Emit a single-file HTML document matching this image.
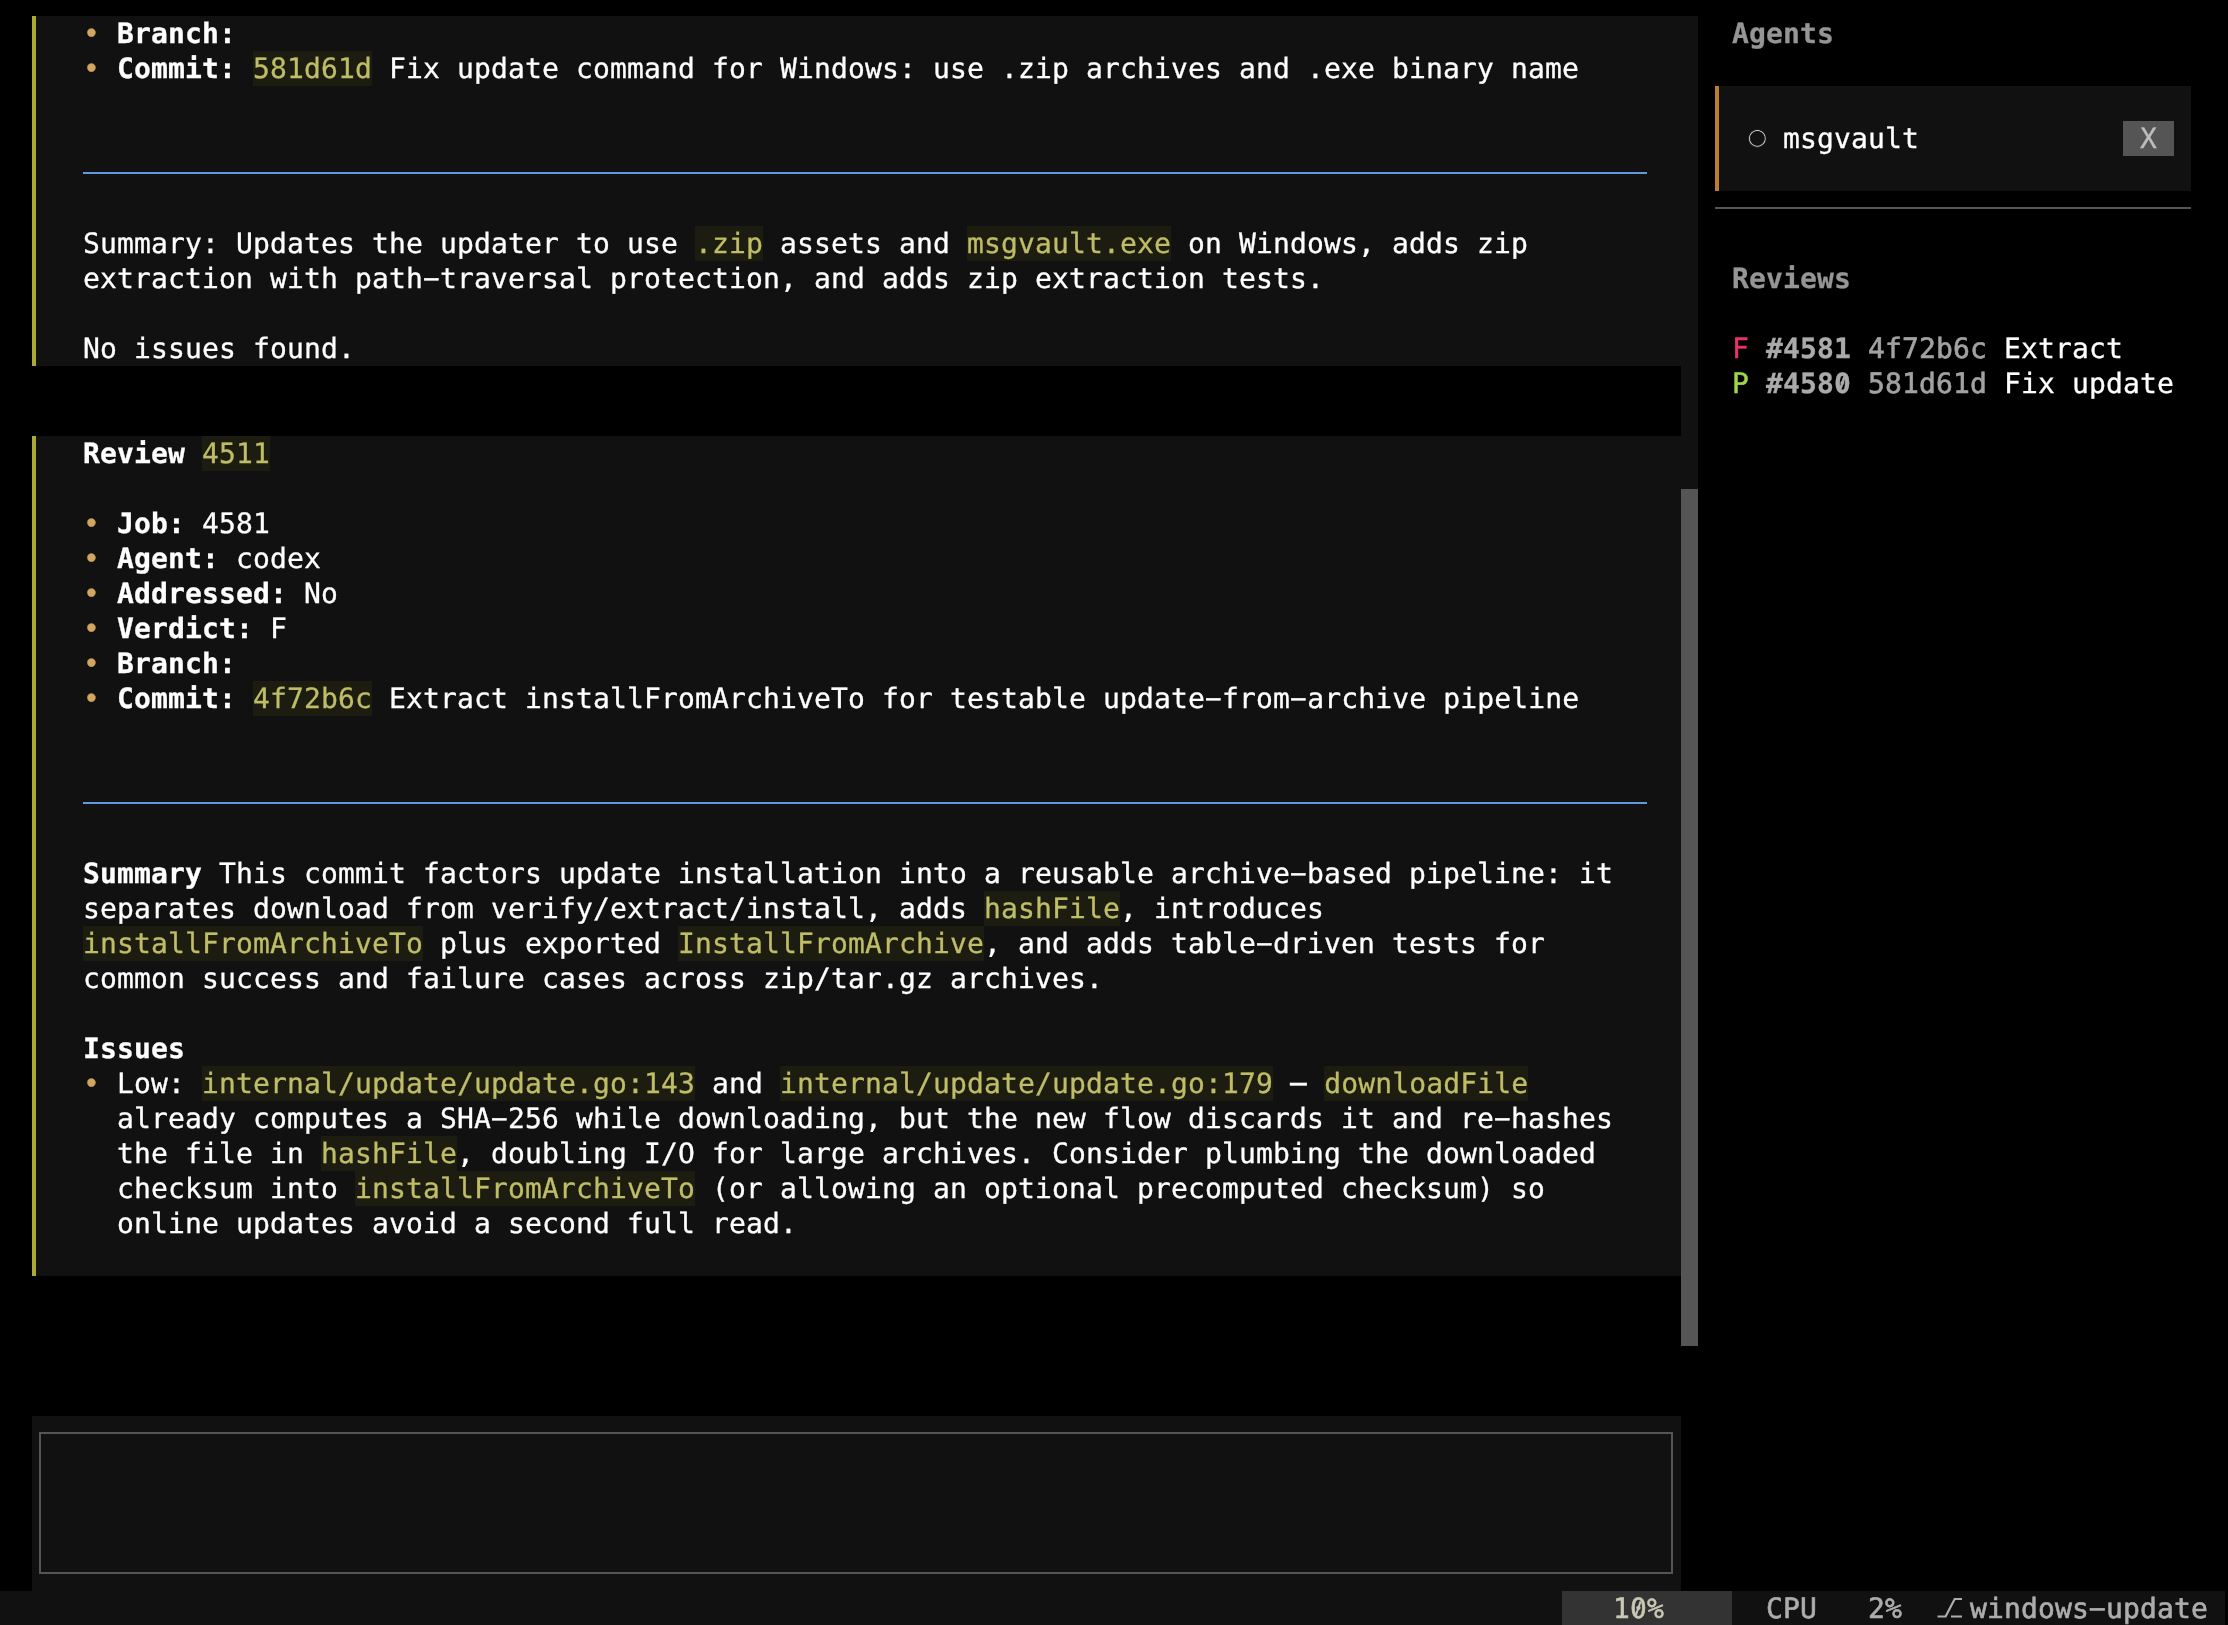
<!DOCTYPE html>
<html lang="en"><head><meta charset="utf-8"><title>reviews</title>
<style>
html,body{margin:0;padding:0;background:#000;}
body{width:2228px;height:1625px;overflow:hidden;position:relative;}
#s{position:absolute;left:0;top:0;width:2228px;height:1625px;background:#000;overflow:hidden;
 font-family:"DejaVu Sans Mono","Liberation Mono",monospace;font-size:28px;color:#ffffff;}
.b{position:absolute;}
#t{position:absolute;left:0;top:0;width:2228px;height:1625px;will-change:transform;}
.r{position:absolute;height:35px;line-height:35px;white-space:pre;letter-spacing:0.1426px;text-rendering:geometricPrecision;font-kerning:none;-webkit-text-stroke:0.3px;font-variant-ligatures:none;}
.r span{display:inline-block;height:35px;vertical-align:top;}
.r span.hy{transform:translateY(-1px) scaleX(1.96);}
.r span.em{transform:translateY(-1px) scaleY(1.15);}
.bd{font-weight:bold;}
.bu{color:#d2a560;}
.cd{color:#bfbd66;}
.hd{font-weight:bold;color:#959595;}
.r span.ci{color:#d0d0d0;-webkit-text-stroke:0.8px #111111;transform:translateY(-2.4px) scale(1.05);}
.xb{color:#bdbdbd;}
.vf{color:#e63468;-webkit-text-stroke:0.45px;}
.vp{color:#a2d848;-webkit-text-stroke:0.45px;}
.jn{font-weight:bold;color:#aaaaaa;}
.sh{color:#a2a2a2;-webkit-text-stroke:0.6px;}
.st1{color:#c9c9b4;-webkit-text-stroke:0.5px;}
.st2{color:#adadad;-webkit-text-stroke:0.6px;}
</style></head>
<body><div id="s">
<div class="b" style="left:32px;top:16px;width:1649px;height:350px;background:#111111;"></div>
<div class="b" style="left:32px;top:436px;width:1649px;height:840px;background:#111111;"></div>
<div class="b" style="left:1681px;top:16px;width:17px;height:1330px;background:#111111;"></div>
<div class="b" style="left:1681px;top:489px;width:17px;height:857px;background:#555555;"></div>
<div class="b" style="left:32px;top:16px;width:4px;height:350px;background:#acaa36;"></div>
<div class="b" style="left:32px;top:436px;width:4px;height:840px;background:#acaa36;"></div>
<div class="b" style="left:32px;top:1416px;width:1649px;height:175px;background:#111111;"></div>
<div class="b" style="left:39px;top:1432px;width:1634px;height:142px;border:2px solid #555555;box-sizing:border-box"></div>
<div class="b" style="left:0px;top:1591px;width:2225px;height:35px;background:#111111;"></div>
<div class="b" style="left:1562px;top:1591px;width:170px;height:35px;background:#333333;"></div>
<div class="b" style="left:83px;top:172px;width:1564px;height:2px;background:#6399e3;"></div>
<div class="b" style="left:83px;top:802px;width:1564px;height:2px;background:#6399e3;"></div>
<div class="b" style="left:1715px;top:86px;width:476px;height:105px;background:#111111;"></div>
<div class="b" style="left:1715px;top:86px;width:4px;height:105px;background:#be7d2c;"></div>
<div class="b" style="left:1715px;top:207px;width:476px;height:2px;background:#555555;"></div>
<div class="b" style="left:253px;top:51px;width:119px;height:35px;background:#1c1c11"></div>
<div class="b" style="left:695px;top:226px;width:68px;height:35px;background:#1c1c11"></div>
<div class="b" style="left:967px;top:226px;width:204px;height:35px;background:#1c1c11"></div>
<div class="b" style="left:202px;top:436px;width:68px;height:35px;background:#1c1c11"></div>
<div class="b" style="left:253px;top:681px;width:119px;height:35px;background:#1c1c11"></div>
<div class="b" style="left:984px;top:891px;width:136px;height:35px;background:#1c1c11"></div>
<div class="b" style="left:83px;top:926px;width:340px;height:35px;background:#1c1c11"></div>
<div class="b" style="left:678px;top:926px;width:306px;height:35px;background:#1c1c11"></div>
<div class="b" style="left:202px;top:1066px;width:493px;height:35px;background:#1c1c11"></div>
<div class="b" style="left:780px;top:1066px;width:493px;height:35px;background:#1c1c11"></div>
<div class="b" style="left:1324px;top:1066px;width:204px;height:35px;background:#1c1c11"></div>
<div class="b" style="left:321px;top:1136px;width:136px;height:35px;background:#1c1c11"></div>
<div class="b" style="left:355px;top:1171px;width:340px;height:35px;background:#1c1c11"></div>
<div class="b" style="left:2123px;top:121px;width:51px;height:35px;background:#555555"></div>
<div id="t">
<div class="r" style="left:83px;top:16px"><span class="bu">•</span> <span class="bd">Branch:</span></div>
<div class="r" style="left:83px;top:51px"><span class="bu">•</span> <span class="bd">Commit:</span> <span class="cd">581d61d</span> Fix update command for Windows: use .zip archives and .exe binary name</div>
<div class="r" style="left:83px;top:226px">Summary: Updates the updater to use <span class="cd">.zip</span> assets and <span class="cd">msgvault.exe</span> on Windows, adds zip</div>
<div class="r" style="left:83px;top:261px">extraction with path<span class="hy">-</span>traversal protection, and adds zip extraction tests.</div>
<div class="r" style="left:83px;top:331px">No issues found.</div>
<div class="r" style="left:83px;top:436px"><span class="bd">Review</span> <span class="cd">4511</span></div>
<div class="r" style="left:83px;top:506px"><span class="bu">•</span> <span class="bd">Job:</span> 4581</div>
<div class="r" style="left:83px;top:541px"><span class="bu">•</span> <span class="bd">Agent:</span> codex</div>
<div class="r" style="left:83px;top:576px"><span class="bu">•</span> <span class="bd">Addressed:</span> No</div>
<div class="r" style="left:83px;top:611px"><span class="bu">•</span> <span class="bd">Verdict:</span> F</div>
<div class="r" style="left:83px;top:646px"><span class="bu">•</span> <span class="bd">Branch:</span></div>
<div class="r" style="left:83px;top:681px"><span class="bu">•</span> <span class="bd">Commit:</span> <span class="cd">4f72b6c</span> Extract installFromArchiveTo for testable update<span class="hy">-</span>from<span class="hy">-</span>archive pipeline</div>
<div class="r" style="left:83px;top:856px"><span class="bd">Summary</span> This commit factors update installation into a reusable archive<span class="hy">-</span>based pipeline: it</div>
<div class="r" style="left:83px;top:891px">separates download from verify/extract/install, adds <span class="cd">hashFile</span>, introduces</div>
<div class="r" style="left:83px;top:926px"><span class="cd">installFromArchiveTo</span> plus exported <span class="cd">InstallFromArchive</span>, and adds table<span class="hy">-</span>driven tests for</div>
<div class="r" style="left:83px;top:961px">common success and failure cases across zip/tar.gz archives.</div>
<div class="r" style="left:83px;top:1031px"><span class="bd">Issues</span></div>
<div class="r" style="left:83px;top:1066px"><span class="bu">•</span> Low: <span class="cd">internal/update/update.go:143</span> and <span class="cd">internal/update/update.go:179</span> <span class="em">—</span> <span class="cd">downloadFile</span></div>
<div class="r" style="left:117px;top:1101px">already computes a SHA<span class="hy">-</span>256 while downloading, but the new flow discards it and re<span class="hy">-</span>hashes</div>
<div class="r" style="left:117px;top:1136px">the file in <span class="cd">hashFile</span>, doubling I/O for large archives. Consider plumbing the downloaded</div>
<div class="r" style="left:117px;top:1171px">checksum into <span class="cd">installFromArchiveTo</span> (or allowing an optional precomputed checksum) so</div>
<div class="r" style="left:117px;top:1206px">online updates avoid a second full read.</div>
<div class="r" style="left:1732px;top:16px"><span class="hd">Agents</span></div>
<div class="r" style="left:1749px;top:121px"><span class="ci">○</span> msgvault</div>
<div class="r" style="left:2123px;top:121px"><span class="xb"> X </span></div>
<div class="r" style="left:1732px;top:261px"><span class="hd">Reviews</span></div>
<div class="r" style="left:1732px;top:331px"><span class="vf">F</span> <span class="jn">#4581</span> <span class="sh">4f72b6c</span> Extract</div>
<div class="r" style="left:1732px;top:366px"><span class="vp">P</span> <span class="jn">#4580</span> <span class="sh">581d61d</span> Fix update</div>
<div class="r" style="left:1613px;top:1591px"><span class="st1">10%</span></div>
<div class="r" style="left:1766px;top:1591px"><span class="st2">CPU</span></div>
<div class="r" style="left:1868px;top:1591px"><span class="st2">2%</span></div>
<div class="r" style="left:1970px;top:1591px"><span class="st2">windows<span class="hy">-</span>update</span></div>
<svg class="b" style="left:1936px;top:1591px" width="34" height="35" viewBox="0 0 34 35"><path d="M1.5 25.5 H9.6 L18.7 8 H26 M15 25.5 H26" fill="none" stroke="#adadad" stroke-width="2.2"/></svg>
<svg class="b" style="left:1630px;top:1591px" width="17" height="35" viewBox="0 0 17 35"><line x1="5.9" y1="24.2" x2="10.6" y2="10.4" stroke="#c9c9b4" stroke-width="2"/></svg>
<svg class="b" style="left:1834px;top:366px" width="17" height="35" viewBox="0 0 17 35"><line x1="5.9" y1="24.2" x2="10.6" y2="10.4" stroke="#a8a8a8" stroke-width="2.6"/></svg>
</div>
</div></body></html>
